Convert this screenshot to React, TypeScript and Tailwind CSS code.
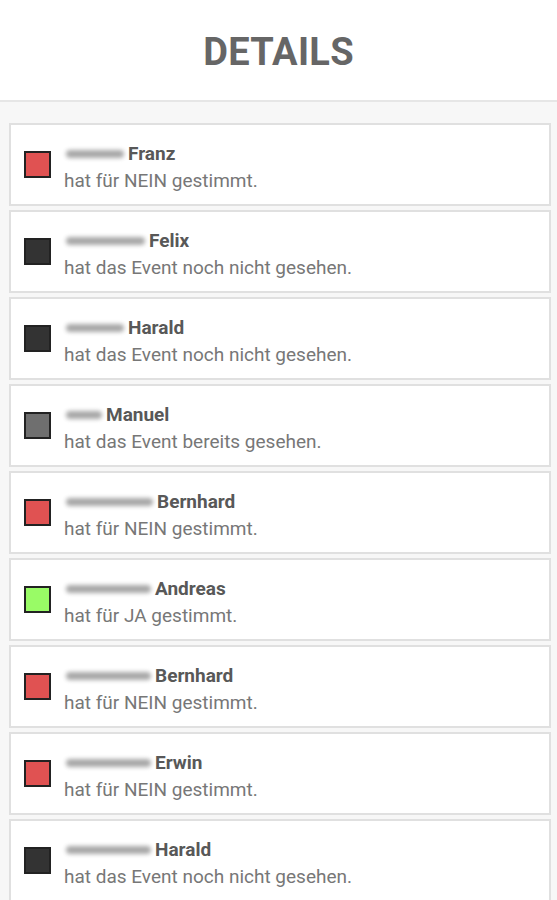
import React from "react";

type Item = { name: string; blur: number; color: string; text: string };

const RED = "bg-[#e05252]";
const DARK = "bg-[#333333]";
const GRAY = "bg-[#6f6f6f]";
const GREEN = "bg-[#99fb66]";

const items: Item[] = [
  { name: "Franz", blur: 62, color: RED, text: "hat für NEIN gestimmt." },
  { name: "Felix", blur: 83, color: DARK, text: "hat das Event noch nicht gesehen." },
  { name: "Harald", blur: 62, color: DARK, text: "hat das Event noch nicht gesehen." },
  { name: "Manuel", blur: 40, color: GRAY, text: "hat das Event bereits gesehen." },
  { name: "Bernhard", blur: 91, color: RED, text: "hat für NEIN gestimmt." },
  { name: "Andreas", blur: 89, color: GREEN, text: "hat für JA gestimmt." },
  { name: "Bernhard", blur: 89, color: RED, text: "hat für NEIN gestimmt." },
  { name: "Erwin", blur: 89, color: RED, text: "hat für NEIN gestimmt." },
  { name: "Harald", blur: 89, color: DARK, text: "hat das Event noch nicht gesehen." },
];

export default function App() {
  return (
    <div className="w-[557px] h-[900px] overflow-hidden bg-[#f7f7f7]" style={{ fontFamily: "Roboto, 'Liberation Sans', sans-serif" }}>
      <div className="h-[102px] bg-white border-b-2 border-[#e6e6e6] flex items-center justify-center">
        <h1 className="text-[38px] font-bold text-[#666666] tracking-[0.3px] mt-[5px]">DETAILS</h1>
      </div>
      <div className="flex flex-col gap-[4px] pt-[21px] pl-[9px] pr-[6px]">
        {items.map((it, i) => (
          <div key={i} className="h-[83px] shrink-0 bg-white border-2 border-[#e0e0e0] flex items-center pl-[13px]">
            <div className={`w-[27px] h-[27px] border-2 border-[#222222] ${it.color} shrink-0`} />
            <div className="ml-[13px] flex flex-col items-start mt-[5px]">
              <div className="flex items-center h-[25px]">
                <div className="relative h-[25px] shrink-0" style={{ width: it.blur }}>
                  <div className="absolute left-[2px] right-[2px] top-[9px] h-[8px] rounded-full bg-[#a8a8a8] blur-[2px]" />
                </div>
                <div className="text-[19px] font-bold text-[#585858] ml-[2px] leading-[25px]">{it.name}</div>
              </div>
              <div className="text-[19px] text-[#777777] leading-[25px] mt-[2px] whitespace-nowrap">{it.text}</div>
            </div>
          </div>
        ))}
      </div>
    </div>
  );
}
